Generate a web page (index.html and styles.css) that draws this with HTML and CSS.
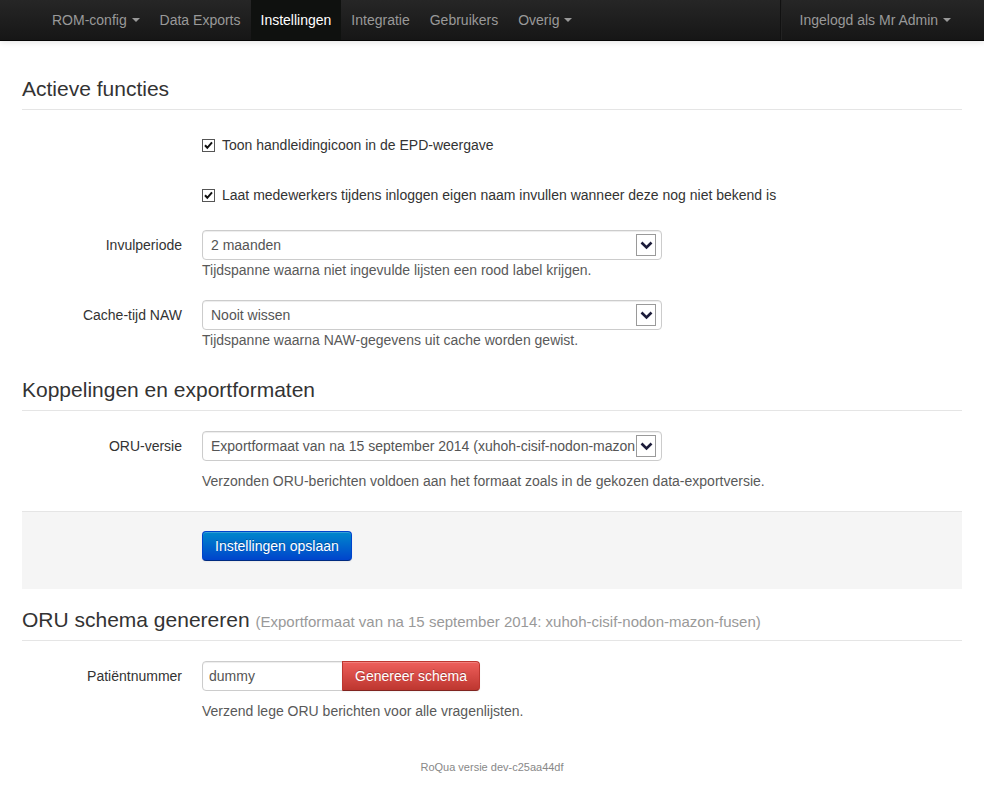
FILE: index.html
```html
<!DOCTYPE html>
<html lang="nl">
<head>
<meta charset="utf-8">
<title>Instellingen</title>
<link rel="stylesheet" href="styles.css">
</head>
<body>
<header class="navbar">
  <div class="container nav-bar-row">
    <ul class="nav">
      <li><a href="#">ROM-config <b class="caret"></b></a></li>
      <li><a href="#">Data Exports</a></li>
      <li class="active"><a href="#">Instellingen</a></li>
      <li><a href="#">Integratie</a></li>
      <li><a href="#">Gebruikers</a></li>
      <li><a href="#">Overig <b class="caret"></b></a></li>
    </ul>
    <ul class="nav nav-right">
      <li class="divider-vertical"></li>
      <li><a href="#">Ingelogd als Mr Admin <b class="caret"></b></a></li>
    </ul>
  </div>
</header>

<main class="container main">
  <form class="form-horizontal">
    <fieldset>
      <legend>Actieve functies</legend>
      <div class="control-group">
        <div class="controls check-row">
          <label class="checkbox">
            <svg class="cb" width="13" height="13" viewBox="0 0 13 13"><rect x="0.5" y="0.5" width="12" height="12" fill="#fff" stroke="#555"/><path d="M3 6.3 L5.3 8.8 L10 3.4" fill="none" stroke="#111" stroke-width="2"/></svg>
            Toon handleidingicoon in de EPD-weergave
          </label>
        </div>
      </div>
      <div class="control-group">
        <div class="controls check-row">
          <label class="checkbox">
            <svg class="cb" width="13" height="13" viewBox="0 0 13 13"><rect x="0.5" y="0.5" width="12" height="12" fill="#fff" stroke="#555"/><path d="M3 6.3 L5.3 8.8 L10 3.4" fill="none" stroke="#111" stroke-width="2"/></svg>
            Laat medewerkers tijdens inloggen eigen naam invullen wanneer deze nog niet bekend is
          </label>
        </div>
      </div>
      <div class="control-group">
        <label class="control-label">Invulperiode</label>
        <div class="controls">
          <div class="select-wrap">
            <select class="select"><option>2 maanden</option></select>
            <span class="select-arrow"><svg width="13" height="9" viewBox="0 0 13 9"><path d="M1.5 1.5 L6.5 6.5 L11.5 1.5" fill="none" stroke="#1c1c3a" stroke-width="2.6"/></svg></span>
          </div>
          <p class="help-block">Tijdspanne waarna niet ingevulde lijsten een rood label krijgen.</p>
        </div>
      </div>
      <div class="control-group">
        <label class="control-label">Cache-tijd NAW</label>
        <div class="controls">
          <div class="select-wrap">
            <select class="select"><option>Nooit wissen</option></select>
            <span class="select-arrow"><svg width="13" height="9" viewBox="0 0 13 9"><path d="M1.5 1.5 L6.5 6.5 L11.5 1.5" fill="none" stroke="#1c1c3a" stroke-width="2.6"/></svg></span>
          </div>
          <p class="help-block">Tijdspanne waarna NAW-gegevens uit cache worden gewist.</p>
        </div>
      </div>
    </fieldset>

    <fieldset>
      <legend>Koppelingen en exportformaten</legend>
      <div class="control-group last">
        <label class="control-label">ORU-versie</label>
        <div class="controls">
          <div class="select-wrap">
            <select class="select"><option>Exportformaat van na 15 september 2014 (xuhoh-cisif-nodon-mazon-fusen)</option></select>
            <span class="select-arrow"><svg width="13" height="9" viewBox="0 0 13 9"><path d="M1.5 1.5 L6.5 6.5 L11.5 1.5" fill="none" stroke="#1c1c3a" stroke-width="2.6"/></svg></span>
          </div>
          <p class="help-block spaced">Verzonden ORU-berichten voldoen aan het formaat zoals in de gekozen data-exportversie.</p>
        </div>
      </div>
    </fieldset>

    <div class="form-actions">
      <button type="button" class="btn btn-primary">Instellingen opslaan</button>
    </div>
  </form>

  <form class="form-horizontal">
    <fieldset>
      <legend>ORU schema genereren <small>(Exportformaat van na 15 september 2014: xuhoh-cisif-nodon-mazon-fusen)</small></legend>
      <div class="control-group">
        <label class="control-label">Patiëntnummer</label>
        <div class="controls">
          <div class="input-append">
            <input class="text-input" type="text" value="dummy">
            <button type="button" class="btn btn-danger">Genereer schema</button>
          </div>
          <p class="help-block spaced">Verzend lege ORU berichten voor alle vragenlijsten.</p>
        </div>
      </div>
    </fieldset>
  </form>

  <footer class="footer">RoQua versie dev-c25aa44df</footer>
</main>
</body>
</html>
```

FILE: styles.css
```css
* { box-sizing: border-box; }

html, body {
  margin: 0;
  padding: 0;
}

body {
  font-family: "Liberation Sans", Arial, sans-serif;
  font-size: 14px;
  line-height: 20px;
  color: #333;
  background: #fff;
}

.container {
  width: 940px;
  margin: 0 auto;
}

/* Navbar */
.navbar {
  height: 41px;
  background: linear-gradient(#262626, #161616);
  border-bottom: 1px solid #050505;
  box-shadow: 0 1px 6px rgba(0, 0, 0, 0.12);
}

.nav-bar-row {
  display: flex;
  justify-content: space-between;
  height: 40px;
}

.nav {
  list-style: none;
  margin: 0;
  padding: 0 0 0 20px;
  display: flex;
}

.nav-right {
  padding-left: 0;
}

.nav li a {
  display: block;
  padding: 10px 10px;
  line-height: 20px;
  color: #999;
  text-decoration: none;
  height: 40px;
}

.nav-right li a {
  padding: 10px 11px 10px 9px;
}

.nav li.active a {
  color: #fff;
  background: #0f110f;
}

.caret {
  display: inline-block;
  width: 0;
  height: 0;
  vertical-align: top;
  margin-top: 8px;
  margin-left: 1px;
  border-top: 4px solid #999;
  border-left: 4px solid transparent;
  border-right: 4px solid transparent;
}

.divider-vertical {
  width: 2px;
  height: 40px;
  margin: 0 9px;
  border-left: 1px solid #111;
  border-right: 1px solid #222;
}

/* Main */
.main {
  padding-top: 28px;
}

form {
  margin: 0;
}

fieldset {
  margin: 0;
  padding: 0;
  border: 0;
  min-width: 0;
}

legend {
  display: block;
  width: 100%;
  padding: 0;
  margin-bottom: 20px;
  font-size: 21px;
  line-height: 40px;
  height: 41px;
  color: #333;
  border-bottom: 1px solid #e5e5e5;
}

legend small {
  font-size: 15px;
  line-height: 1;
  color: #999;
}

.control-group {
  display: grid;
  grid-template-columns: 160px 1fr;
  column-gap: 20px;
  margin-bottom: 20px;
}

.control-group.last {
  margin-bottom: 0;
}

.control-label {
  grid-column: 1;
  padding-top: 5px;
  text-align: right;
}

.controls {
  grid-column: 2;
}

.check-row {
  min-height: 30px;
  padding-top: 5px;
}

.checkbox {
  display: flex;
  align-items: center;
  gap: 7px;
}

.cb {
  flex: none;
  display: block;
}

.select-wrap {
  position: relative;
  width: 460px;
  height: 30px;
}

.select {
  appearance: none;
  -webkit-appearance: none;
  display: block;
  width: 460px;
  height: 30px;
  padding: 4px 26px 4px 8px;
  font-family: "Liberation Sans", Arial, sans-serif;
  font-size: 14px;
  line-height: 20px;
  color: #555;
  background: #fff;
  border: 1px solid #ccc;
  border-radius: 4px;
  box-shadow: inset 0 1px 1px rgba(0, 0, 0, 0.075);
}

.select-arrow {
  position: absolute;
  top: 4px;
  right: 6px;
  width: 20px;
  height: 22px;
  background: #fff;
  border: 1px solid #9a9a9a;
  display: flex;
  align-items: center;
  justify-content: center;
}

.help-block {
  margin: 0;
  color: #595959;
}

.help-block.spaced {
  margin-top: 10px;
}

/* Form actions */
.form-actions {
  margin: 20px 0 11px;
  padding: 19px 20px 28px 180px;
  background: #f5f5f5;
  border-top: 1px solid #e5e5e5;
}

.btn {
  display: inline-block;
  height: 30px;
  padding: 4px 12px;
  font-family: "Liberation Sans", Arial, sans-serif;
  font-size: 14px;
  line-height: 20px;
  color: #fff;
  text-shadow: 0 -1px 0 rgba(0, 0, 0, 0.25);
  border: 1px solid rgba(0, 0, 0, 0.15);
  border-bottom-color: rgba(0, 0, 0, 0.3);
  border-radius: 4px;
  box-shadow: inset 0 1px 0 rgba(255, 255, 255, 0.2), 0 1px 2px rgba(0, 0, 0, 0.05);
  cursor: pointer;
}

.btn-primary {
  background: linear-gradient(#0088cc, #0044cc);
  border-color: #0044cc #0044cc #002a80;
}

.btn-danger {
  background: linear-gradient(#ee5f5b, #bd362f);
  border-color: #bd362f #bd362f #802420;
}

/* Input append */
.input-append {
  display: flex;
}

.text-input {
  width: 141px;
  height: 30px;
  padding: 4px 6px;
  font-family: "Liberation Sans", Arial, sans-serif;
  font-size: 14px;
  line-height: 20px;
  color: #555;
  border: 1px solid #ccc;
  border-radius: 4px 0 0 4px;
  box-shadow: inset 0 1px 1px rgba(0, 0, 0, 0.075);
  margin: 0;
}

.input-append .btn {
  margin-left: -1px;
  border-radius: 0 4px 4px 0;
}

/* Footer */
.footer {
  margin-top: 16px;
  text-align: center;
  font-size: 11px;
  line-height: 20px;
  color: #888;
}
```
